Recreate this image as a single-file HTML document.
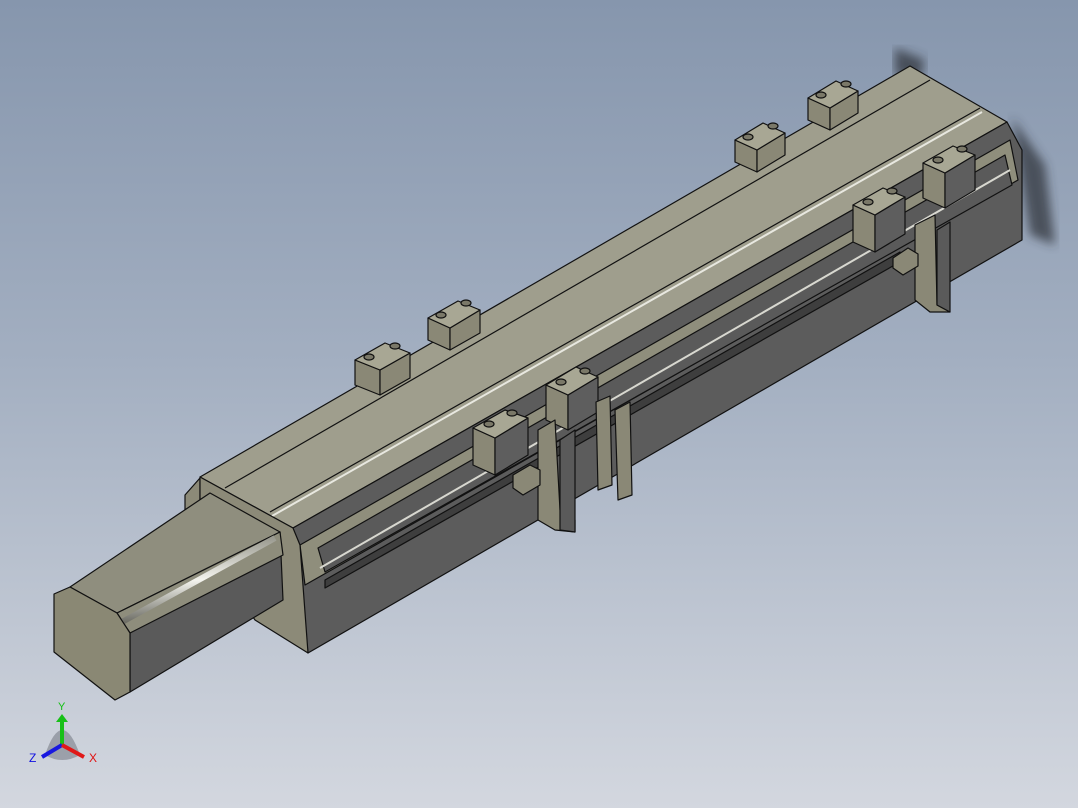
<!DOCTYPE html>
<html><head><meta charset="utf-8"><style>
html,body{margin:0;padding:0;width:1078px;height:808px;overflow:hidden}
body{background:linear-gradient(#8696ad 0%,#a3afc1 45%,#d3d7df 100%);font-family:"Liberation Sans",sans-serif}
svg{position:absolute;left:0;top:0}
</style></head><body>
<svg width="1078" height="808" viewBox="0 0 1078 808">
<defs>
<filter id="bl"><feGaussianBlur stdDeviation="5"/></filter>
<linearGradient id="rod" x1="0" y1="0" x2="0" y2="1"><stop offset="0" stop-color="#9a9a90"/><stop offset=".5" stop-color="#f4f4ee"/><stop offset="1" stop-color="#6e6e66"/></linearGradient>
</defs>
<g stroke="#111" stroke-width="1.2" stroke-linejoin="round">
<path d="M895,48 L925,60 L920,80 L895,75Z" fill="#2a2d35" stroke="none" filter="url(#bl)" opacity=".7"/>
<path d="M1012,118 L1045,165 L1055,245 L1030,235Z" fill="#2a2d35" stroke="none" filter="url(#bl)" opacity=".7"/>
<polygon points="185,495 200,478 200,540 185,530" fill="#8c8a78"/>
<polygon points="200,477 910,66 1007,122 293,528" fill="#9f9e8d"/>
<polyline points="225,488 930,80" fill="none"/>
<polyline points="270,512 980,108" fill="none"/>
<polyline points="272,516 982,112" fill="none" stroke="#e8e8e0" stroke-width="2"/>
<polygon points="293,528 1007,122 1022,150 1022,240 308,653 295,540" fill="#5c5c5c"/>
<polygon points="300,545 1010,140 1018,180 305,585" fill="#8f8e7c"/>
<polygon points="318,548 1005,155 1012,185 325,572" fill="#5a5a5a"/>
<polyline points="320,568 1010,170" fill="none" stroke="#d8d8d0" stroke-width="2"/>
<polygon points="325,580 900,252 900,262 325,588" fill="#3e3e3e"/>
<polygon points="200,477 293,528 300,545 308,653 255,620 200,540" fill="#8c8a78"/>
<polygon points="70,587 210,493 280,532 117,613" fill="#8f8e7e"/>
<polygon points="130,633 280,532 283,600 130,692" fill="#5a5a5a"/>
<polygon points="117,613 280,532 283,555 130,633" fill="#8e8d7c"/>
<polyline points="122,622 275,538" fill="none" stroke="url(#rod)" stroke-width="6"/>
<polygon points="54,594 70,587 117,613 130,633 130,692 115,700 54,652" fill="#8a8874"/>
<g fill="#8a8876">
<polygon points="355,360 355,385 380,395 380,370"/><polygon points="380,370 380,395 410,378 410,353"/><polygon points="355,360 385,343 410,353 380,370" fill="#a8a794"/>
<polygon points="428,318 428,340 450,350 450,328"/><polygon points="450,328 450,350 480,333 480,310"/><polygon points="428,318 458,301 480,310 450,328" fill="#a8a794"/>
<polygon points="735,140 735,162 757,172 757,150"/><polygon points="757,150 757,172 785,155 785,133"/><polygon points="735,140 763,123 785,133 757,150" fill="#a8a794"/>
<polygon points="808,98 808,120 830,130 830,108"/><polygon points="830,108 830,130 858,113 858,91"/><polygon points="808,98 836,81 858,91 830,108" fill="#a8a794"/>
<polygon points="473,428 473,465 495,475 495,438"/><polygon points="495,438 495,475 528,455 528,418" fill="#5e5e5e"/><polygon points="473,428 505,410 528,418 495,438" fill="#a8a794"/>
<polygon points="546,385 546,420 568,430 568,395"/><polygon points="568,395 568,430 598,412 598,377" fill="#5e5e5e"/><polygon points="546,385 576,367 598,377 568,395" fill="#a8a794"/>
<polygon points="853,205 853,242 875,252 875,215"/><polygon points="875,215 875,252 905,234 905,197" fill="#5e5e5e"/><polygon points="853,205 883,188 905,197 875,215" fill="#a8a794"/>
<polygon points="923,163 923,198 945,208 945,173"/><polygon points="945,173 945,208 975,190 975,155" fill="#5e5e5e"/><polygon points="923,163 953,146 975,155 945,173" fill="#a8a794"/>
<polygon points="538,430 555,420 560,510 575,520 575,532 555,530 538,520"/>
<polygon points="560,440 575,430 575,532 560,530" fill="#5a5a5a"/>
<polygon points="615,410 630,402 632,495 618,500"/>
<polygon points="596,402 610,396 612,485 598,490"/>
<polygon points="915,225 935,215 937,305 950,312 930,312 915,300"/>
<polygon points="937,230 950,222 950,312 937,305" fill="#5a5a5a"/>
<polygon points="513,475 530,465 540,470 540,485 523,495 513,488"/>
<polygon points="893,258 908,248 918,254 918,266 903,275 893,268"/>
</g>
<g fill="#7a7868">
<ellipse cx="369" cy="357" rx="5" ry="3"/><ellipse cx="395" cy="346" rx="5" ry="3"/>
<ellipse cx="441" cy="315" rx="5" ry="3"/><ellipse cx="466" cy="303" rx="5" ry="3"/>
<ellipse cx="748" cy="137" rx="5" ry="3"/><ellipse cx="773" cy="126" rx="5" ry="3"/>
<ellipse cx="821" cy="95" rx="5" ry="3"/><ellipse cx="846" cy="84" rx="5" ry="3"/>
<ellipse cx="489" cy="424" rx="5" ry="3"/><ellipse cx="512" cy="413" rx="5" ry="3"/>
<ellipse cx="561" cy="382" rx="5" ry="3"/><ellipse cx="585" cy="371" rx="5" ry="3"/>
<ellipse cx="868" cy="202" rx="5" ry="3"/><ellipse cx="892" cy="191" rx="5" ry="3"/>
<ellipse cx="938" cy="160" rx="5" ry="3"/><ellipse cx="962" cy="149" rx="5" ry="3"/>
</g>
</g>
<g>
<path d="M45,755 Q62,705 80,755 Q62,765 45,755Z" fill="#6a6e78" opacity=".5"/>
<line x1="62" y1="745" x2="62" y2="720" stroke="#18c018" stroke-width="4"/>
<polygon points="56,722 68,722 62,714" fill="#18c018"/>
<line x1="62" y1="745" x2="42" y2="757" stroke="#1818e0" stroke-width="4"/>
<line x1="62" y1="745" x2="84" y2="757" stroke="#e01818" stroke-width="4"/>
<text x="58" y="710" font-size="11" fill="#10c010">Y</text>
<text x="29" y="762" font-size="12" fill="#1010e0">Z</text>
<text x="89" y="762" font-size="12" fill="#e01010">X</text>
</g>
</svg>
</body></html>
